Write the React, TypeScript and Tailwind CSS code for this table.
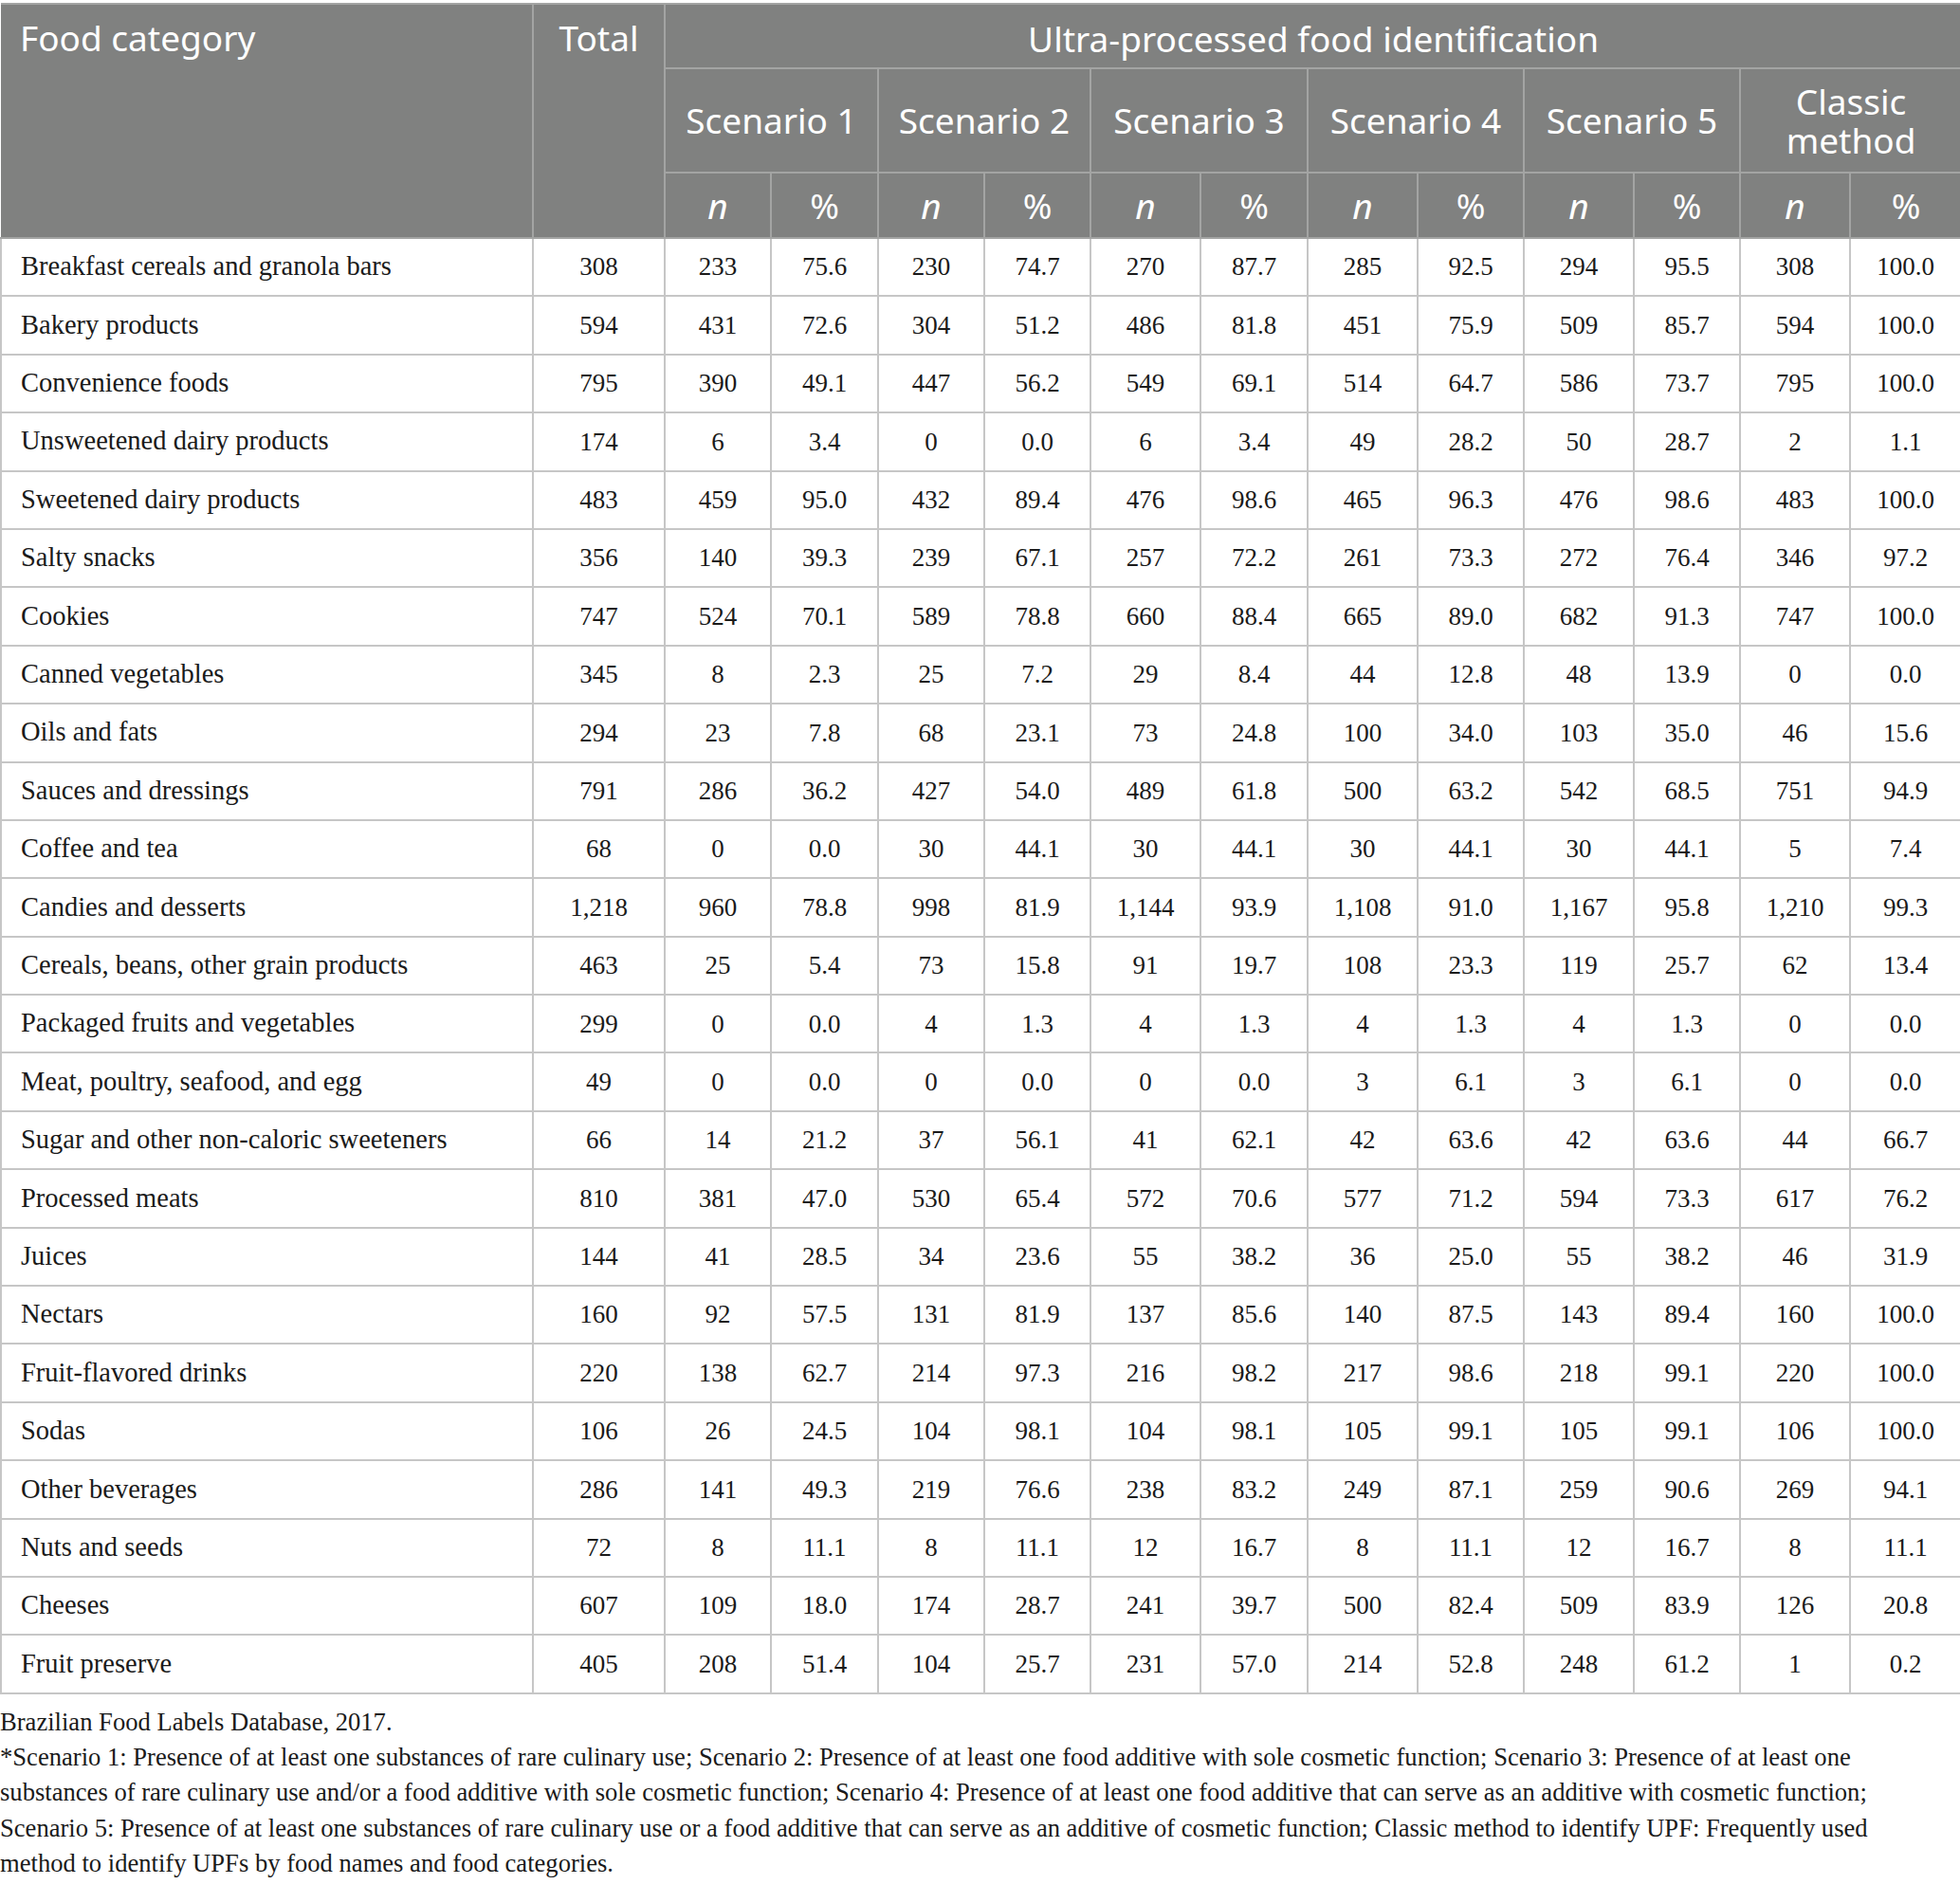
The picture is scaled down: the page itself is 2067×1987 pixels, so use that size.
const rows: [string, string, ...string[]][] = [
  ["Breakfast cereals and granola bars", "308", "233", "75.6", "230", "74.7", "270", "87.7", "285", "92.5", "294", "95.5", "308", "100.0"],
  ["Bakery products", "594", "431", "72.6", "304", "51.2", "486", "81.8", "451", "75.9", "509", "85.7", "594", "100.0"],
  ["Convenience foods", "795", "390", "49.1", "447", "56.2", "549", "69.1", "514", "64.7", "586", "73.7", "795", "100.0"],
  ["Unsweetened dairy products", "174", "6", "3.4", "0", "0.0", "6", "3.4", "49", "28.2", "50", "28.7", "2", "1.1"],
  ["Sweetened dairy products", "483", "459", "95.0", "432", "89.4", "476", "98.6", "465", "96.3", "476", "98.6", "483", "100.0"],
  ["Salty snacks", "356", "140", "39.3", "239", "67.1", "257", "72.2", "261", "73.3", "272", "76.4", "346", "97.2"],
  ["Cookies", "747", "524", "70.1", "589", "78.8", "660", "88.4", "665", "89.0", "682", "91.3", "747", "100.0"],
  ["Canned vegetables", "345", "8", "2.3", "25", "7.2", "29", "8.4", "44", "12.8", "48", "13.9", "0", "0.0"],
  ["Oils and fats", "294", "23", "7.8", "68", "23.1", "73", "24.8", "100", "34.0", "103", "35.0", "46", "15.6"],
  ["Sauces and dressings", "791", "286", "36.2", "427", "54.0", "489", "61.8", "500", "63.2", "542", "68.5", "751", "94.9"],
  ["Coffee and tea", "68", "0", "0.0", "30", "44.1", "30", "44.1", "30", "44.1", "30", "44.1", "5", "7.4"],
  ["Candies and desserts", "1,218", "960", "78.8", "998", "81.9", "1,144", "93.9", "1,108", "91.0", "1,167", "95.8", "1,210", "99.3"],
  ["Cereals, beans, other grain products", "463", "25", "5.4", "73", "15.8", "91", "19.7", "108", "23.3", "119", "25.7", "62", "13.4"],
  ["Packaged fruits and vegetables", "299", "0", "0.0", "4", "1.3", "4", "1.3", "4", "1.3", "4", "1.3", "0", "0.0"],
  ["Meat, poultry, seafood, and egg", "49", "0", "0.0", "0", "0.0", "0", "0.0", "3", "6.1", "3", "6.1", "0", "0.0"],
  ["Sugar and other non-caloric sweeteners", "66", "14", "21.2", "37", "56.1", "41", "62.1", "42", "63.6", "42", "63.6", "44", "66.7"],
  ["Processed meats", "810", "381", "47.0", "530", "65.4", "572", "70.6", "577", "71.2", "594", "73.3", "617", "76.2"],
  ["Juices", "144", "41", "28.5", "34", "23.6", "55", "38.2", "36", "25.0", "55", "38.2", "46", "31.9"],
  ["Nectars", "160", "92", "57.5", "131", "81.9", "137", "85.6", "140", "87.5", "143", "89.4", "160", "100.0"],
  ["Fruit-flavored drinks", "220", "138", "62.7", "214", "97.3", "216", "98.2", "217", "98.6", "218", "99.1", "220", "100.0"],
  ["Sodas", "106", "26", "24.5", "104", "98.1", "104", "98.1", "105", "99.1", "105", "99.1", "106", "100.0"],
  ["Other beverages", "286", "141", "49.3", "219", "76.6", "238", "83.2", "249", "87.1", "259", "90.6", "269", "94.1"],
  ["Nuts and seeds", "72", "8", "11.1", "8", "11.1", "12", "16.7", "8", "11.1", "12", "16.7", "8", "11.1"],
  ["Cheeses", "607", "109", "18.0", "174", "28.7", "241", "39.7", "500", "82.4", "509", "83.9", "126", "20.8"],
  ["Fruit preserve", "405", "208", "51.4", "104", "25.7", "231", "57.0", "214", "52.8", "248", "61.2", "1", "0.2"],
];

const colWidths = [561, 139, 112, 113, 112, 112, 116, 113, 116, 112, 116, 112, 116, 117];

const footnote = [
  "Brazilian Food Labels Database, 2017.",
  "*Scenario 1: Presence of at least one substances of rare culinary use; Scenario 2: Presence of at least one food additive with sole cosmetic function; Scenario 3: Presence of at least one",
  "substances of rare culinary use and/or a food additive with sole cosmetic function; Scenario 4: Presence of at least one food additive that can serve as an additive with cosmetic function;",
  "Scenario 5: Presence of at least one substances of rare culinary use or a food additive that can serve as an additive of cosmetic function; Classic method to identify UPF: Frequently used",
  "method to identify UPFs by food names and food categories.",
];

const th = "border-2 border-[#a3a4a3] font-normal text-white";

export default function App() {
  return (
    <div className="w-[2067px] bg-white pt-[3px]">
      <table className="w-[2067px] table-fixed border-collapse">
        <colgroup>
          {colWidths.map((w, i) => (
            <col key={i} style={{ width: w }} />
          ))}
        </colgroup>
        <thead className="bg-[#808180] font-['Noto_Sans',sans-serif] text-[37px] leading-[40px]">
          <tr className="h-[68px]">
            <th rowSpan={3} className={`${th} border-l-0 px-[20px] pt-[15px] text-left align-top`}>
              Food category
            </th>
            <th rowSpan={3} className={`${th} pt-[15px] text-center align-top`}>
              Total
            </th>
            <th colSpan={12} className={`${th} border-r-0 pt-[5px] text-center`}>
              Ultra-processed food identification
            </th>
          </tr>
          <tr className="h-[110px]">
            {["Scenario 1", "Scenario 2", "Scenario 3", "Scenario 4", "Scenario 5"].map((s) => (
              <th key={s} colSpan={2} className={`${th} text-center`}>
                {s}
              </th>
            ))}
            <th colSpan={2} className={`${th} border-r-0 text-center leading-[41px]`}>
              Classic
              <br />
              method
            </th>
          </tr>
          <tr className="h-[69px]">
            {Array.from({ length: 6 }).flatMap((_, i) => [
              <th key={`n${i}`} className={`${th} text-center italic`}>
                n
              </th>,
              <th key={`p${i}`} className={`${th} text-center ${i === 5 ? "border-r-0" : ""}`}>
                %
              </th>,
            ])}
          </tr>
        </thead>
        <tbody className="font-['Liberation_Serif',serif] text-[27px] text-[#1a1a1a]">
          {rows.map((r) => (
            <tr key={r[0]} className="h-[61.4px]">
              {r.map((c, i) => (
                <td
                  key={i}
                  className={`border-2 border-[#c6c6c6] ${
                    i === 0 ? "px-[20px] text-left text-[28.5px]" : "text-center"
                  }`}
                >
                  {c}
                </td>
              ))}
            </tr>
          ))}
        </tbody>
      </table>
      <div className="mt-[11px] font-['Liberation_Serif',serif] text-[26.6px] leading-[37.3px] text-[#1a1a1a]">
        {footnote.map((l) => (
          <div key={l} className="whitespace-nowrap">
            {l}
          </div>
        ))}
      </div>
    </div>
  );
}
